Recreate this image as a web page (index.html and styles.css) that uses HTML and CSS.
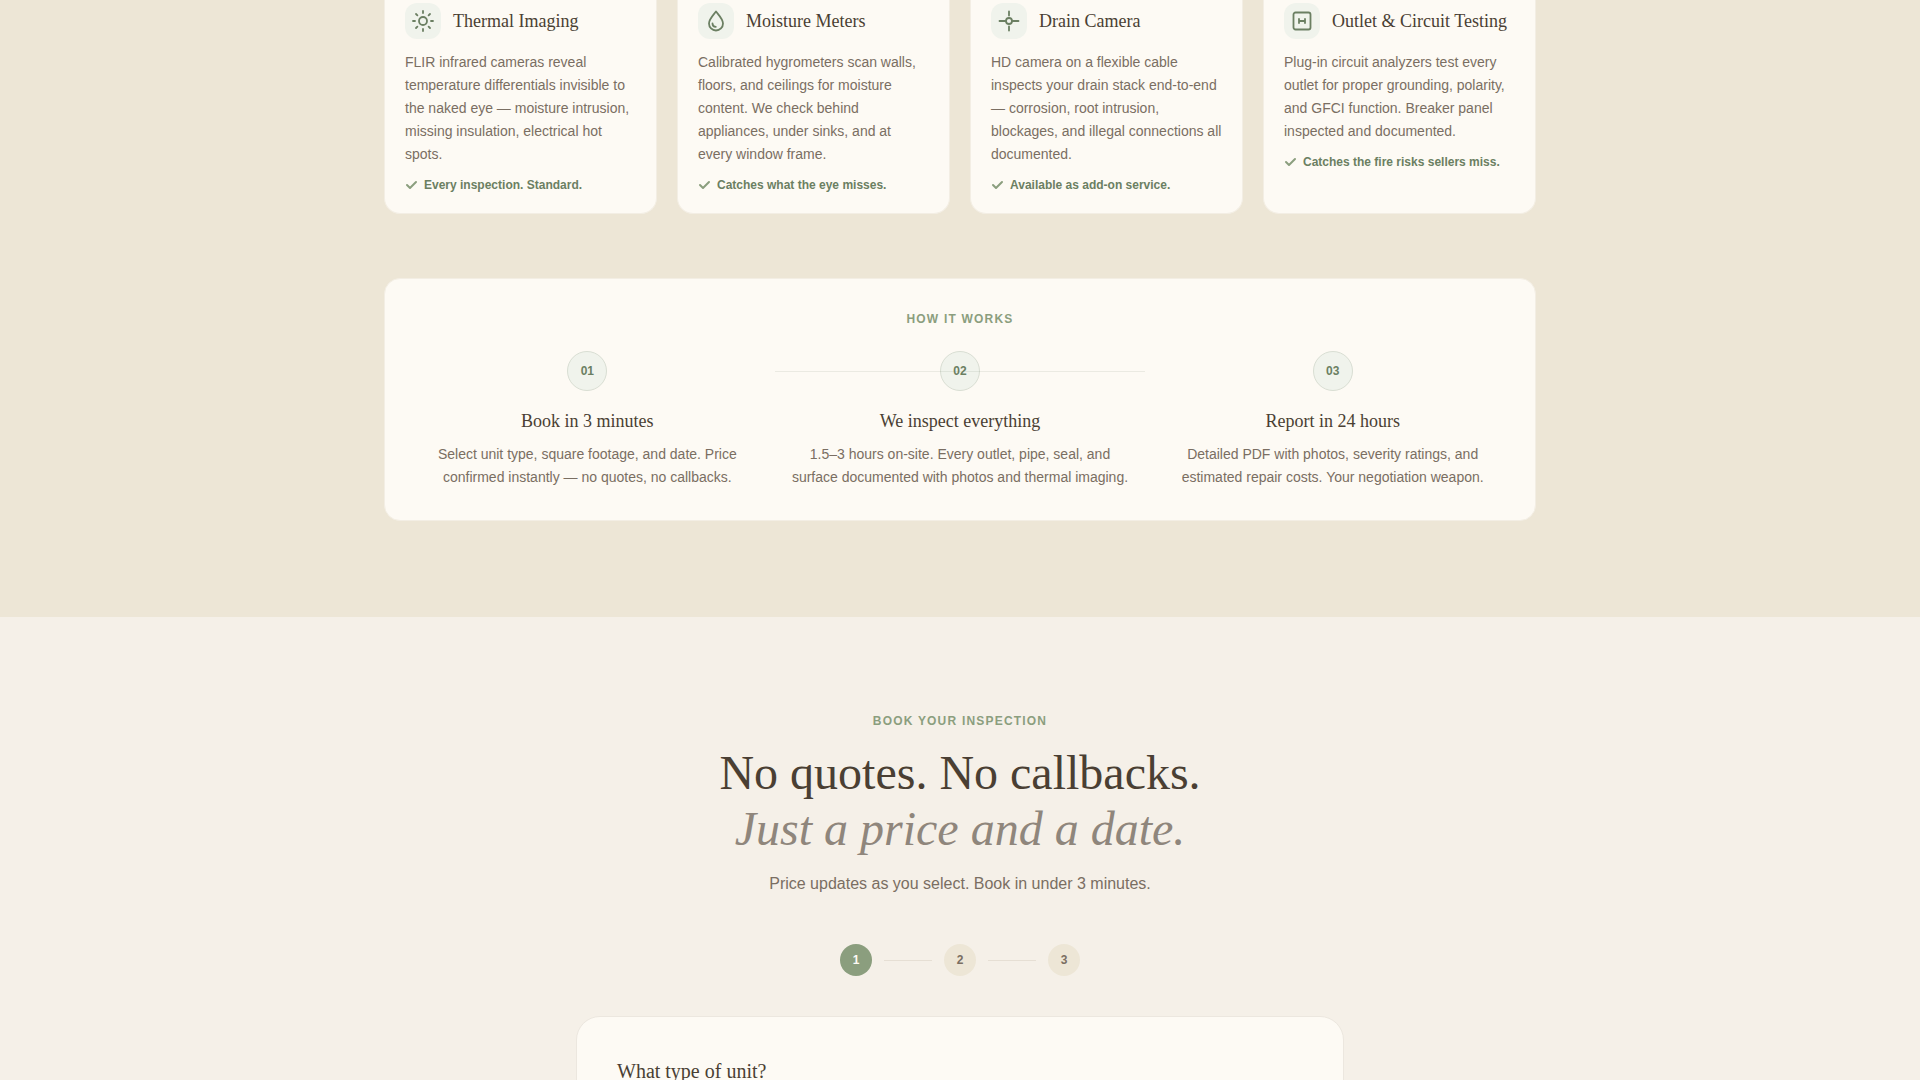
FILE: index.html
```html
<!DOCTYPE html>
<html lang="en">
<head>
    <meta charset="UTF-8">
    <meta name="viewport" content="width=device-width, initial-scale=1.0">
    <title>Home Inspection</title>
    <link rel="stylesheet" href="styles.css">
</head>
<body>
    <!-- Tools and process -->
    <section class="tools">
        <div class="container">
            <div class="tool-grid">
                <article class="tool-card">
                    <div class="tool-head">
                        <span class="tool-icon">
                            <svg width="24" height="24" viewBox="0 0 24 24" aria-hidden="true">
                                <circle cx="12" cy="12" r="4"/>
                                <path d="M12 2v2M12 20v2M2 12h2M20 12h2M5 5l1.400 1.400M17.600 17.600L19 19M5 19l1.400-1.400M17.600 6.400L19 5"/>
                            </svg>
                        </span>
                        <h3>Thermal Imaging</h3>
                    </div>
                    <p>FLIR infrared cameras reveal temperature differentials invisible to the naked eye — moisture intrusion, missing insulation, electrical hot spots.</p>
                    <div class="tool-note">
                        <svg width="13" height="13" viewBox="0 0 13 13" aria-hidden="true"><path d="M2 6l3 3 6-6"/></svg>
                        Every inspection. Standard.
                    </div>
                </article>

                <article class="tool-card">
                    <div class="tool-head">
                        <span class="tool-icon">
                            <svg width="24" height="24" viewBox="0 0 24 24" aria-hidden="true">
                                <path d="M12 2.500C9.500 6 5 10 5 14.500a7 7 0 0 0 14 0C19 10 14.500 6 12 2.500z"/>
                                <path d="M8.500 14.500c0 2 1.500 3.300 3.300 3.300"/>
                            </svg>
                        </span>
                        <h3>Moisture Meters</h3>
                    </div>
                    <p>Calibrated hygrometers scan walls, floors, and ceilings for moisture content. We check behind appliances, under sinks, and at every window frame.</p>
                    <div class="tool-note">
                        <svg width="13" height="13" viewBox="0 0 13 13" aria-hidden="true"><path d="M2 6l3 3 6-6"/></svg>
                        Catches what the eye misses.
                    </div>
                </article>

                <article class="tool-card">
                    <div class="tool-head">
                        <span class="tool-icon">
                            <svg width="24" height="24" viewBox="0 0 24 24" aria-hidden="true">
                                <circle cx="12" cy="12" r="3"/>
                                <path d="M2.500 12H9M15 12h6.500M12 2.500v4M12 17.500v4"/>
                            </svg>
                        </span>
                        <h3>Drain Camera</h3>
                    </div>
                    <p>HD camera on a flexible cable inspects your drain stack end-to-end — corrosion, root intrusion, blockages, and illegal connections all documented.</p>
                    <div class="tool-note">
                        <svg width="13" height="13" viewBox="0 0 13 13" aria-hidden="true"><path d="M2 6l3 3 6-6"/></svg>
                        Available as add-on service.
                    </div>
                </article>

                <article class="tool-card">
                    <div class="tool-head">
                        <span class="tool-icon">
                            <svg width="24" height="24" viewBox="0 0 24 24" aria-hidden="true">
                                <rect x="3.500" y="3.500" width="17" height="17" rx="2"/>
                                <path d="M9 10v4M15 10v4M9 12h6"/>
                            </svg>
                        </span>
                        <h3>Outlet &amp; Circuit Testing</h3>
                    </div>
                    <p>Plug-in circuit analyzers test every outlet for proper grounding, polarity, and GFCI function. Breaker panel inspected and documented.</p>
                    <div class="tool-note">
                        <svg width="13" height="13" viewBox="0 0 13 13" aria-hidden="true"><path d="M2 6l3 3 6-6"/></svg>
                        Catches the fire risks sellers miss.
                    </div>
                </article>
            </div>

            <div class="process">
                <h2 class="eyebrow">How it works</h2>
                <div class="process-grid">
                    <div class="process-step">
                        <span class="process-num">01</span>
                        <h3>Book in 3 minutes</h3>
                        <p>Select unit type, square footage, and date. Price confirmed instantly — no quotes, no callbacks.</p>
                    </div>
                    <div class="process-step">
                        <span class="process-num">02</span>
                        <h3>We inspect everything</h3>
                        <p>1.5–3 hours on-site. Every outlet, pipe, seal, and surface documented with photos and thermal imaging.</p>
                    </div>
                    <div class="process-step">
                        <span class="process-num">03</span>
                        <h3>Report in 24 hours</h3>
                        <p>Detailed PDF with photos, severity ratings, and estimated repair costs. Your negotiation weapon.</p>
                    </div>
                </div>
            </div>
        </div>
    </section>

    <!-- Booking -->
    <section class="booking">
        <div class="eyebrow">Book your inspection</div>
        <h2 class="booking-title">No quotes. No callbacks.<br><em>Just a price and a date.</em></h2>
        <p class="booking-lead">Price updates as you select. Book in under 3 minutes.</p>

        <div class="progress">
            <span class="progress-dot active">1</span>
            <span class="progress-line"></span>
            <span class="progress-dot">2</span>
            <span class="progress-line"></span>
            <span class="progress-dot">3</span>
        </div>

        <div class="booking-card">
            <h3>What type of unit?</h3>
        </div>
    </section>
</body>
</html>
```
FILE: styles.css
```css
* {
    box-sizing: border-box;
    margin: 0;
    padding: 0;
}

body {
    font-family: "Liberation Sans", Arial, sans-serif;
    font-size: 14px;
    line-height: 23px;
    color: #7a6e62;
    background-color: #f5f0e8;
}

h2,
h3 {
    font-family: "Liberation Serif", Georgia, serif;
    font-weight: 400;
    color: #4a3f33;
}

h3 {
    font-size: 18px;
    line-height: 28px;
}

svg {
    fill: none;
    stroke: #6b7f62;
    stroke-linecap: round;
    stroke-linejoin: round;
    flex-shrink: 0;
}

.container {
    max-width: 1200px;
    margin: 0 auto;
    padding: 0 24px;
}

.eyebrow {
    font-family: "Liberation Sans", Arial, sans-serif;
    font-size: 12px;
    font-weight: 700;
    line-height: 16px;
    letter-spacing: 0.1em;
    text-transform: uppercase;
    text-align: center;
    color: #8b9e7e;
}

/* Tools */
.tools {
    background-color: #ede6d6;
    padding-bottom: 96px;
}

.tool-grid {
    display: grid;
    grid-template-columns: repeat(4, 1fr);
    gap: 20px;
}

.tool-card {
    background-color: #fdfaf4;
    border: 1px solid #f3eee4;
    border-top: none;
    border-radius: 0 0 16px 16px;
    padding: 3px 20px 20px;
}

.tool-head {
    display: flex;
    align-items: center;
    gap: 12px;
    margin-bottom: 12px;
}

.tool-icon {
    display: flex;
    align-items: center;
    justify-content: center;
    width: 36px;
    height: 36px;
    border-radius: 12px;
    background-color: #f0f3ec;
    flex-shrink: 0;
}

.tool-icon svg {
    stroke-width: 1.800;
}

.tool-note {
    display: flex;
    align-items: center;
    gap: 6px;
    margin-top: 11px;
    font-size: 12px;
    font-weight: 700;
    line-height: 16px;
    color: #6b7f62;
}

.tool-note svg {
    stroke: #8b9e7e;
    stroke-width: 2;
}

/* How it works */
.process {
    margin-top: 64px;
    padding: 32px 32px 31px;
    background-color: #fdfaf4;
    border: 1px solid #f3eee4;
    border-radius: 16px;
}

.process-grid {
    position: relative;
    display: grid;
    grid-template-columns: repeat(3, 1fr);
    gap: 32px;
    margin-top: 24px;
    text-align: center;
}

/* line behind the middle step */
.process-grid::before {
    content: "";
    position: absolute;
    z-index: 1;
    top: 20px;
    left: 33%;
    right: 33%;
    height: 1px;
    background-color: rgba(107, 127, 98, 0.12);
}

.process-num {
    display: flex;
    align-items: center;
    justify-content: center;
    width: 40px;
    height: 40px;
    margin: 0 auto 16px;
    border: 1px solid #d9ded3;
    border-radius: 50%;
    background-color: #f0f3ec;
    color: #6b7f62;
    font-size: 12px;
    font-weight: 700;
}

.process-step h3 {
    margin-bottom: 8px;
}

/* Booking */
.booking {
    padding: 96px 24px;
}

.booking-title {
    margin-top: 16px;
    font-size: 48px;
    line-height: 56px;
    text-align: center;
}

.booking-title em {
    color: #8f867c;
}

.booking-lead {
    margin-top: 15px;
    font-size: 16px;
    line-height: 24px;
    text-align: center;
}

.progress {
    display: flex;
    align-items: center;
    justify-content: center;
    gap: 12px;
    margin: 48px 0 40px;
}

.progress-dot {
    display: flex;
    align-items: center;
    justify-content: center;
    width: 32px;
    height: 32px;
    border-radius: 50%;
    background-color: #ede6d6;
    font-size: 12px;
    font-weight: 700;
}

.progress-dot.active {
    background-color: #8b9e7e;
    color: #fdfaf4;
}

.progress-line {
    width: 48px;
    height: 1px;
    background-color: #e6dfd4;
}

.booking-card {
    max-width: 768px;
    margin: 0 auto;
    padding: 40px;
    background-color: #fdfaf4;
    border: 1px solid #ece7df;
    border-radius: 24px;
}

.booking-card h3 {
    font-size: 20px;
}
```
